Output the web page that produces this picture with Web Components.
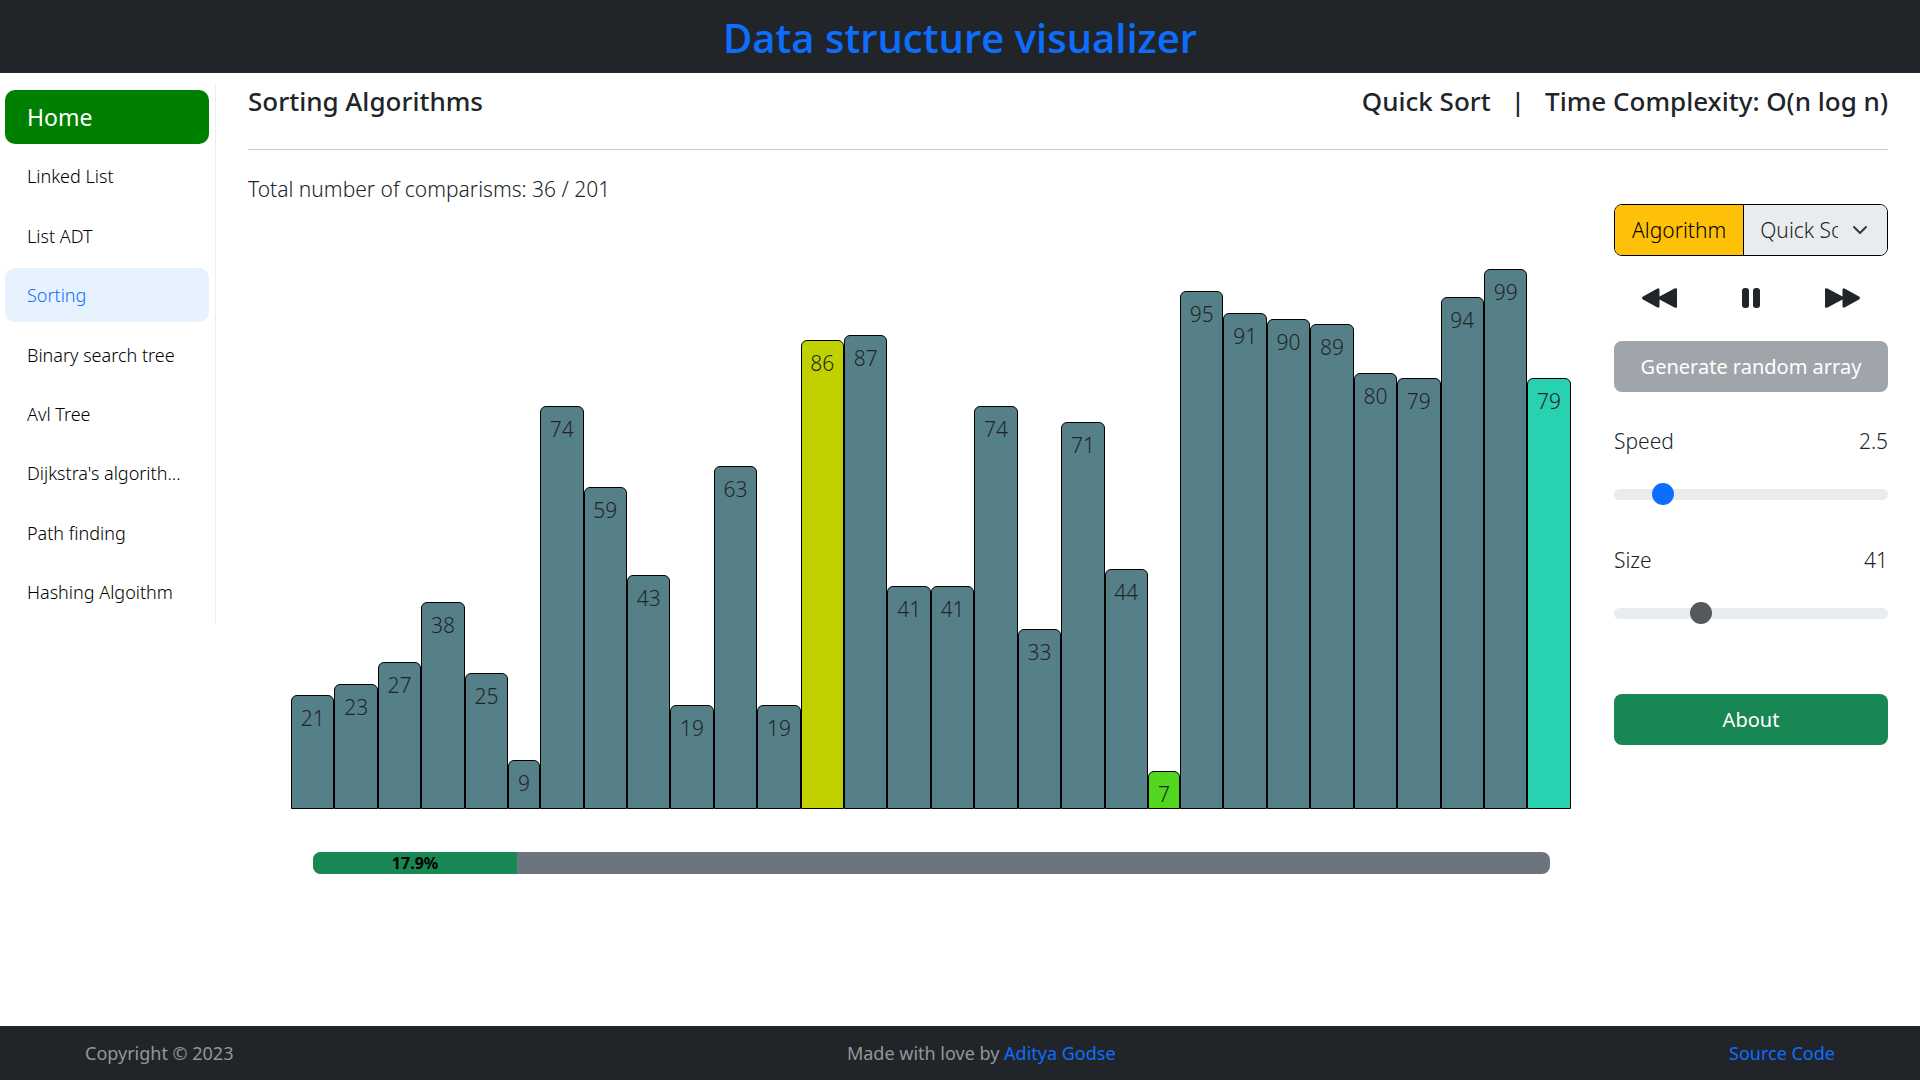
<!DOCTYPE html>
<html lang="en">
<head>
<meta charset="utf-8">
<title>Data structure visualizer</title>
<style>
  body {
    margin: 0;
    background: #fff;
    color: #212529;
    font-family: "Noto Sans", "Open Sans", sans-serif;
    font-size: 21px;
    font-weight: 300;
    line-height: 32px;
  }
</style>
</head>
<body>
<dsv-app></dsv-app>
<script>
  const define = (name, html, setup) => {
    const template = document.createElement('template');
    template.innerHTML = '<style>*{box-sizing:border-box}</style>' + html;
    customElements.define(name, class extends HTMLElement {
      connectedCallback() {
        if (this.shadowRoot) return;
        this.attachShadow({ mode: 'open' }).append(template.content.cloneNode(true));
        if (setup) setup(this, this.shadowRoot);
      }
    });
  };

  define('dsv-header', `
    <style>
      :host { display: block; background: #212529; padding: 14px 16px 11px; text-align: center; }
      h1 { margin: 0; color: #0d6efd; font-family: "Open Sans", sans-serif; font-size: 40px; font-weight: 600; line-height: 48px; }
    </style>
    <h1><slot></slot></h1>`);

  define('dsv-nav-item', `
    <style>
      :host { display: block; }
      a {
        display: block; height: 54px; padding: 0 16px 0 22px; border-radius: 10px;
        color: #000; font-size: 18px; font-weight: 350; line-height: 54px; text-decoration: none;
        overflow: hidden; text-overflow: ellipsis; white-space: nowrap;
      }
      :host([kind="home"]) a { background: #008000; color: #fff; font-size: 23px; font-weight: 400; }
      :host([kind="active"]) a { background: #e6f3ff; color: #0d6efd; }
    </style>
    <a href="#"><slot></slot></a>`);

  define('dsv-sidebar', `
    <style>
      :host { display: block; }
      nav {
        display: flex; flex-direction: column; justify-content: space-between;
        min-height: 540px; padding: 6px 6px 5px 5px; border-right: 1px solid #eee;
      }
    </style>
    <nav aria-label="Topics">
      <dsv-nav-item kind="home">Home</dsv-nav-item>
      <dsv-nav-item>Linked List</dsv-nav-item>
      <dsv-nav-item>List ADT</dsv-nav-item>
      <dsv-nav-item kind="active">Sorting</dsv-nav-item>
      <dsv-nav-item>Binary search tree</dsv-nav-item>
      <dsv-nav-item>Avl Tree</dsv-nav-item>
      <dsv-nav-item>Dijkstra's algorith...</dsv-nav-item>
      <dsv-nav-item>Path finding</dsv-nav-item>
      <dsv-nav-item>Hashing Algoithm</dsv-nav-item>
    </nav>`);

  define('dsv-heading', `
    <style>
      :host { display: flex; justify-content: space-between; padding-bottom: 32px; border-bottom: 1px solid #c8c9ca; }
      h2 { display: flex; gap: 20px; margin: 0; font-size: 26px; font-weight: 500; line-height: 32px; }
    </style>
    <h2>Sorting Algorithms</h2>
    <h2><span>Quick Sort</span><span>|</span><span>Time Complexity: O(n log n)</span></h2>`);

  define('dsv-bar', `
    <style>
      :host {
        display: block; min-width: 0; padding-top: 6px; text-align: center;
        background: var(--bar-color, #568087); border: 1px solid #000; border-radius: 6px 6px 0 0;
      }
    </style>
    <slot></slot>`);

  define('dsv-chart', `
    <style>
      :host { display: flex; align-items: flex-end; height: 545px; }
    </style>`,
    (host, root) => {
      const colors = { 12: '#c1d100', 20: '#50d71e', 29: '#28d2b1' };
      host.getAttribute('values').split(' ').forEach((value, i) => {
        const bar = document.createElement('dsv-bar');
        bar.textContent = value;
        bar.style.flex = (value.length > 1 ? 29 : 21) + ' 1 0';
        bar.style.height = value + '%';
        if (colors[i]) bar.style.setProperty('--bar-color', colors[i]);
        root.append(bar);
      });
    });

  define('dsv-progress', `
    <style>
      :host { display: block; overflow: hidden; border-radius: 8px; background: #6c757d; }
      div { width: 16.5%; background: #198754; color: #000; font-size: 16px; font-weight: 700; line-height: 22px; text-align: center; }
    </style>
    <div role="progressbar" aria-valuenow="17.9" aria-valuemin="0" aria-valuemax="100"><slot></slot></div>`);

  define('dsv-button', `
    <style>
      :host { display: block; }
      button {
        display: block; width: 100%; height: 51px; padding: 0; border: 0; border-radius: 8px;
        background: #198754; color: #fff; font: inherit; font-size: 20px; font-weight: 400;
      }
      button:disabled { background: #a0a5ab; }
    </style>
    <button type="button"><slot></slot></button>`,
    (host, root) => { root.querySelector('button').disabled = host.hasAttribute('disabled'); });

  define('dsv-algorithm-select', `
    <style>
      :host { display: flex; height: 52px; border: 1px solid #000; border-radius: 8px; overflow: hidden; }
      label { flex: none; padding: 0 17px; background: #ffc107; color: #000; border-right: 1px solid #000; line-height: 50px; }
      .box { position: relative; flex: 1; min-width: 0; display: flex; background: #e9ecef; }
      select {
        flex: 1; min-width: 0; appearance: none; border: 0; border-radius: 0; background: none;
        padding: 0 49px 0 16px; color: #212529; font: inherit; text-overflow: clip;
      }
      svg { position: absolute; right: 19px; top: 17px; pointer-events: none; }
    </style>
    <label for="algorithm">Algorithm</label>
    <div class="box">
      <select id="algorithm"><option>Quick Sort</option></select>
      <svg width="16" height="16" viewBox="0 0 16 16" fill="none" stroke="#343a40" stroke-width="2" stroke-linecap="round" stroke-linejoin="round"><path d="m2 5 6 6 6-6"/></svg>
    </div>`);

  define('dsv-transport', `
    <style>
      :host { display: flex; justify-content: space-between; padding: 0 27px; }
      button { display: block; padding: 0; border: 0; background: none; color: #212529; line-height: 0; }
    </style>
    <button type="button" aria-label="Slower">
      <svg width="37" height="36" viewBox="0 0 37 36" fill="currentColor"><path d="M2 16.500 16 8.700Q18.500 7.500 18.500 10V16.500L33.500 8.500Q36 7.500 36 9.500V26.500Q36 28.500 33.500 27.500L18.500 19.500V26Q18.500 28.500 16 27.300L2 19.500Q0 18 2 16.500Z"/></svg>
    </button>
    <button type="button" aria-label="Pause">
      <svg width="20" height="36" viewBox="0 0 20 36" fill="currentColor"><rect x="1" y="8" width="7" height="20" rx="3"/><rect x="12" y="8" width="7" height="20" rx="3"/></svg>
    </button>
    <button type="button" aria-label="Faster">
      <svg width="37" height="36" viewBox="0 0 37 36" fill="currentColor"><path d="M35 16.500 21 8.700Q18.500 7.500 18.500 10V16.500L3.500 8.500Q1 7.500 1 9.500V26.500Q1 28.500 3.500 27.500L18.500 19.500V26Q18.500 28.500 21 27.300L35 19.500Q37 18 35 16.500Z"/></svg>
    </button>`);

  define('dsv-range', `
    <style>
      :host { display: block; }
      .head { display: flex; justify-content: space-between; }
      input { display: block; appearance: none; width: 100%; height: 22px; margin: 26px 0 0; background: none; }
      input::-webkit-slider-runnable-track { height: 11px; border-radius: 6px; background: #e9ecef; }
      input::-webkit-slider-thumb { appearance: none; width: 22px; height: 22px; margin-top: -6px; border: 0; border-radius: 50%; background: #0d6efd; }
      input:disabled::-webkit-slider-thumb { background: #55595d; }
    </style>
    <div class="head"><label for="range"><slot></slot></label><output for="range"></output></div>
    <input id="range" type="range">`,
    (host, root) => {
      const input = root.querySelector('input');
      input.min = host.getAttribute('min');
      input.max = host.getAttribute('max');
      input.step = host.getAttribute('step');
      input.value = host.getAttribute('value');
      input.disabled = host.hasAttribute('disabled');
      const show = () => { root.querySelector('output').textContent = input.value; };
      input.addEventListener('input', show);
      show();
    });

  define('dsv-controls', `
    <style>
      :host { display: flex; flex-direction: column; }
      dsv-transport { margin: 24px 0 25px; }
      dsv-range { margin-top: 33px; }
      dsv-range + dsv-range { margin-top: 39px; }
      .about { margin-top: 70px; }
    </style>
    <dsv-algorithm-select></dsv-algorithm-select>
    <dsv-transport></dsv-transport>
    <dsv-button disabled>Generate random array</dsv-button>
    <dsv-range min="1" max="11" step="0.5" value="2.5">Speed</dsv-range>
    <dsv-range min="20" max="90" step="1" value="41" disabled>Size</dsv-range>
    <dsv-button class="about">About</dsv-button>`);

  define('dsv-sorting', `
    <style>
      :host { display: block; }
      .row { display: flex; }
      .left { flex: 1; min-width: 0; padding-top: 23px; }
      p { margin: 0; }
      dsv-chart { margin: 59px 43px 0; }
      dsv-progress { margin: 43px 64px 0 65px; }
      dsv-controls { flex: none; width: 274px; padding-top: 54px; }
    </style>
    <dsv-heading></dsv-heading>
    <div class="row">
      <div class="left">
        <p>Total number of comparisms: 36 / 201</p>
        <dsv-chart values="21 23 27 38 25 9 74 59 43 19 63 19 86 87 41 41 74 33 71 44 7 95 91 90 89 80 79 94 99 79"></dsv-chart>
        <dsv-progress>17.9%</dsv-progress>
      </div>
      <dsv-controls></dsv-controls>
    </div>`);

  define('dsv-footer', `
    <style>
      :host {
        display: flex; justify-content: space-between; padding: 11px 85px; background: #212529;
        color: #939699; font-size: 18px; font-weight: 400;
      }
      a { color: #0d6efd; text-decoration: none; }
    </style>
    <span>Copyright © 2023</span>
    <span>Made with love by <a href="#">Aditya Godse</a></span>
    <a href="#">Source Code</a>`);

  define('dsv-app', `
    <style>
      :host { display: flex; flex-direction: column; min-height: 100vh; }
      main { flex: 1; display: flex; padding: 11px 32px 0 0; }
      dsv-sidebar { flex: none; width: 216px; }
      dsv-sorting { flex: 1; min-width: 0; margin-left: 32px; padding-top: 1px; }
    </style>
    <dsv-header>Data structure visualizer</dsv-header>
    <main>
      <dsv-sidebar></dsv-sidebar>
      <dsv-sorting></dsv-sorting>
    </main>
    <dsv-footer></dsv-footer>`);
</script>
</body>
</html>
